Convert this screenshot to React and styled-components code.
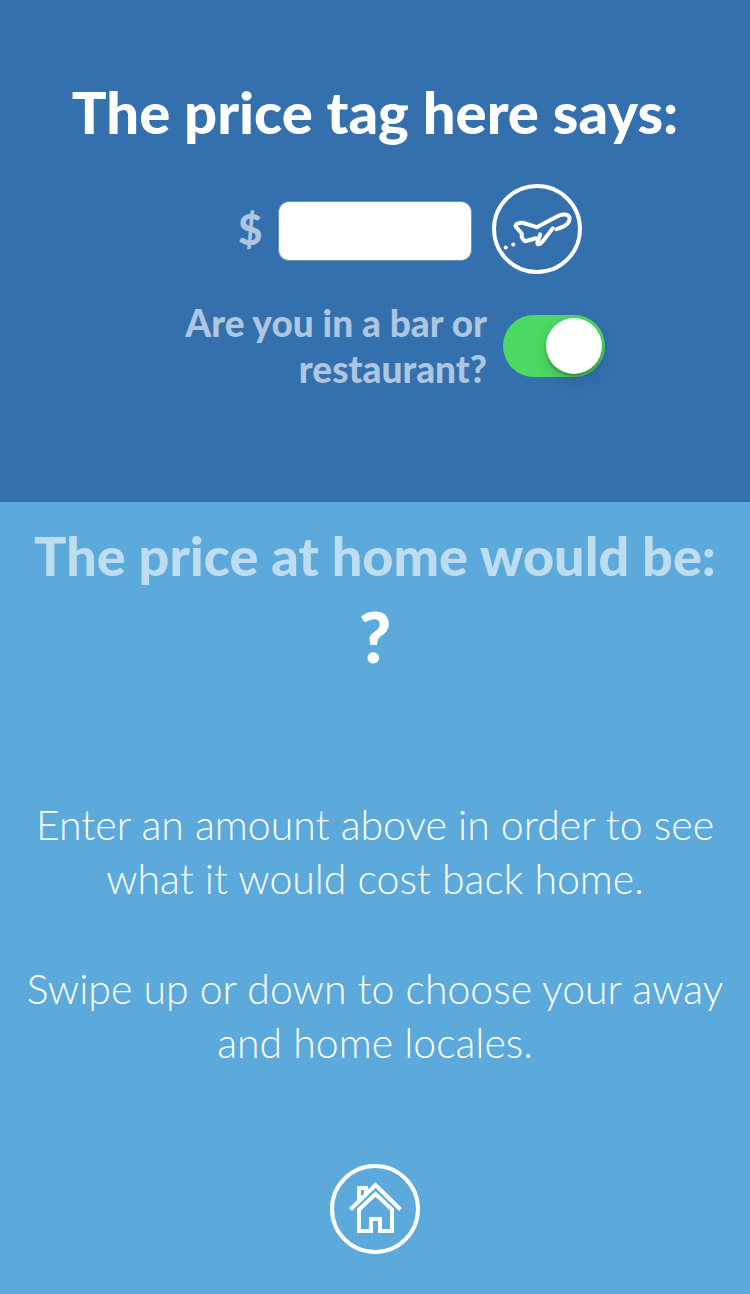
import React, { useState } from "react";
import styled, { createGlobalStyle } from "styled-components";

const GlobalStyle = createGlobalStyle`
  *, *::before, *::after { box-sizing: border-box; }
  body {
    margin: 0;
    background: #5caadb;
    color: #fff;
    font-family: Lato, "Liberation Sans", sans-serif;
    -webkit-font-smoothing: antialiased;
  }
`;

const Screen = styled.main`
  min-height: 100vh;
  display: flex;
  flex-direction: column;
`;

const AwayPanel = styled.section`
  display: flex;
  flex-direction: column;
  padding: 80px 16px 110px;
  background: #346fae;
`;

const HomePanel = styled.section`
  flex: 1;
  display: flex;
  flex-direction: column;
  align-items: center;
  padding: 22px 16px 40px;
  background: #5caadb;
`;

const Heading = styled.h1`
  margin: 0;
  text-align: center;
  font-size: ${(p) => p.$size}px;
  line-height: 64px;
  font-weight: 900;
  opacity: ${(p) => (p.$muted ? 0.6 : 1)};
`;

const FormRow = styled.div`
  display: flex;
  align-items: center;
  justify-content: center;
  margin-top: ${(p) => p.$top}px;
  padding-left: ${(p) => p.$indent}px;
`;

const CurrencyLabel = styled.label`
  width: 24px;
  margin-right: 16px;
  font-size: 42px;
  line-height: 54px;
  font-weight: 900;
  color: #aec6df;
`;

const AmountInput = styled.input`
  width: 194px;
  height: 60px;
  margin: 4px 20px 0 0;
  padding: 0 12px;
  border: 1px solid #6f93b8;
  border-radius: 11px;
  background: #fff;
  color: #346fae;
  font: 700 36px Lato, "Liberation Sans", sans-serif;
  outline: none;
`;

const RoundButton = styled.button`
  flex: none;
  width: 90px;
  height: 90px;
  padding: 0;
  border: 0;
  border-radius: 50%;
  background: transparent;
  color: inherit;
  cursor: pointer;

  svg { display: block; }
`;

const QuestionLabel = styled.label`
  width: 304px;
  margin-right: 16px;
  text-align: right;
  font-size: 37px;
  line-height: 46px;
  font-weight: 900;
  color: #aec6df;
`;

const Switch = styled.input`
  appearance: none;
  flex: none;
  width: 102px;
  height: 62px;
  margin: 0;
  padding: 3px;
  border-radius: 31px;
  overflow: visible;
  background: ${(p) => (p.checked ? "#4cd964" : "#d5dde6")};
  cursor: pointer;

  &::before {
    content: "";
    display: block;
    width: 56px;
    height: 56px;
    margin-left: ${(p) => (p.checked ? "auto" : "0")};
    border-radius: 50%;
    background: #fff;
    box-shadow: 0 6px 16px rgba(0, 0, 0, 0.15), 0 2px 3px rgba(0, 0, 0, 0.3);
  }
`;

const Result = styled.output`
  font-size: 70px;
  line-height: 96px;
  font-weight: 900;
`;

const Hints = styled.div`
  display: flex;
  flex-direction: column;
  gap: 56px;
  margin: 114px 0 94px;
`;

const Hint = styled.p`
  margin: 0;
  text-align: center;
  text-wrap: pretty;
  font-size: 41px;
  line-height: 54px;
  font-weight: 300;
`;

const Ring = () => (
  <circle cx="45" cy="45" r="43" fill="none" stroke="currentColor" strokeWidth="4" />
);

const PlaneIcon = () => (
  <svg width="90" height="90" viewBox="0 0 90 90" aria-hidden="true">
    <Ring />
    <g fill="none" stroke="currentColor" strokeWidth="4" strokeLinecap="round" strokeLinejoin="round">
      <path d="M64.5 45.2 L70.5 43 C75 41 77.5 38 77.5 34.5 C77.5 31.5 75 30.2 71.5 30.5 C69 30.7 67 31.4 64.5 32.7 L44.8 43.2 L31.5 39 C29.8 38.5 28.5 38.7 27 39.2 L24.8 40 C23.3 40.7 23.2 42 24.2 43.2 L29.7 49.5 V53 C30.5 55 32 56.5 33.3 57.2 L44 54.3" />
      <path d="M48.2 50.3 L45.5 58 C44.9 60.4 46.5 60.9 48.2 59.7 L51 57 L60.7 44.4" />
    </g>
    <circle cx="13.7" cy="63.5" r="2" fill="currentColor" />
    <circle cx="21.2" cy="60.5" r="2" fill="currentColor" />
  </svg>
);

const HouseIcon = () => (
  <svg width="90" height="90" viewBox="0 0 90 90" aria-hidden="true">
    <Ring />
    <g fill="none" stroke="currentColor" strokeWidth="4">
      <path d="M20.5 45.5 L45.5 21 L70.5 45.5" />
      <path d="M29 38 V24 H36 V30" />
      <path d="M29 45.5 V67 H41 V55 H50 V67 H62 V45.5 L45.5 30 Z" />
    </g>
  </svg>
);

export default function App() {
  const [amount, setAmount] = useState("");
  const [dining, setDining] = useState(true);

  return (
    <Screen>
      <GlobalStyle />
      <AwayPanel>
        <Heading $size={58}>The price tag here says:</Heading>
        <FormRow $top={40} $indent={70}>
          <CurrencyLabel htmlFor="amount">$</CurrencyLabel>
          <AmountInput
            id="amount"
            inputMode="decimal"
            value={amount}
            onChange={(e) => setAmount(e.target.value)}
          />
          <RoundButton type="button" aria-label="Choose away locale">
            <PlaneIcon />
          </RoundButton>
        </FormRow>
        <FormRow $top={26} $indent={38}>
          <QuestionLabel htmlFor="dining">Are you in a bar or restaurant?</QuestionLabel>
          <Switch
            id="dining"
            type="checkbox"
            role="switch"
            checked={dining}
            onChange={(e) => setDining(e.target.checked)}
          />
        </FormRow>
      </AwayPanel>
      <HomePanel>
        <Heading as="h2" $size={54} $muted>The price at home would be:</Heading>
        <Result htmlFor="amount dining">?</Result>
        <Hints>
          <Hint>Enter an amount above in order to see what it would cost back home.</Hint>
          <Hint>Swipe up or down to choose your away and home locales.</Hint>
        </Hints>
        <RoundButton type="button" aria-label="Choose home locale">
          <HouseIcon />
        </RoundButton>
      </HomePanel>
    </Screen>
  );
}
